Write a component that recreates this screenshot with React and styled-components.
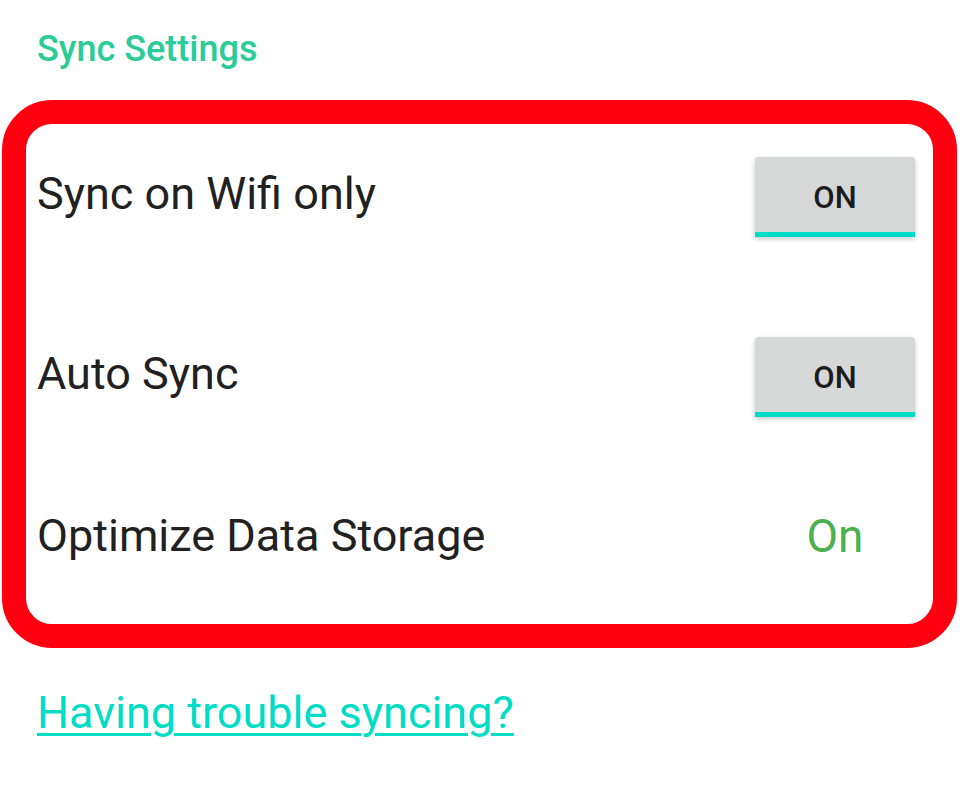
import React from "react";
import styled, { createGlobalStyle } from "styled-components";

const Global = createGlobalStyle`
  html, body { margin: 0; padding: 0; background: #ffffff; }
  body { font-family: Roboto, "Noto Sans", sans-serif; }
`;

const Page = styled.div`
  width: 960px;
  padding-top: 29px;
  box-sizing: border-box;
`;

const Title = styled.h2`
  margin: 0 0 31px 37px;
  font-size: 36px;
  line-height: 40px;
  font-weight: 500;
  color: #2bcc97;
`;

const Card = styled.div`
  margin-left: 2px;
  width: 955px;
  height: 548px;
  box-sizing: border-box;
  border: 24px solid #ff0011;
  border-radius: 50px;
  padding: 33px 18px 0 11px;
  display: flex;
  flex-direction: column;
`;

const Row = styled.div`
  display: flex;
  align-items: center;
  justify-content: space-between;
  margin-top: ${(p) => p.$gap || 0}px;
`;

const Label = styled.span`
  font-size: 45px;
  line-height: 52px;
  color: #212121;
  padding-bottom: ${(p) => p.$lift || 0}px;
`;

const Toggle = styled.button`
  width: 160px;
  height: 80px;
  box-sizing: border-box;
  border: none;
  border-bottom: 5px solid #00dcc6;
  border-radius: 4px 4px 0 0;
  background: #d6d7d7;
  box-shadow: 0 2px 5px rgba(0, 0, 0, 0.22);
  font-family: Roboto, "Noto Sans", sans-serif;
  font-size: 31px;
  font-weight: 500;
  color: #1c1c1c;
  padding: 5px 0 0 0;
  display: flex;
  align-items: center;
  justify-content: center;
`;

const Value = styled.span`
  width: 160px;
  text-align: center;
  font-size: 46px;
  line-height: 52px;
  color: #4caf50;
`;

const Link = styled.a`
  display: inline-block;
  margin: 39px 0 0 37px;
  font-size: 45px;
  line-height: 52px;
  color: #00dcc6;
  text-decoration: underline;
  text-decoration-thickness: 3px;
  text-underline-offset: 5px;
  cursor: pointer;
`;

export default function App() {
  return (
    <>
      <Global />
      <Page>
        <Title>Sync Settings</Title>
        <Card>
          <Row>
            <Label $lift={6}>Sync on Wifi only</Label>
            <Toggle>ON</Toggle>
          </Row>
          <Row $gap={100}>
            <Label $lift={6}>Auto Sync</Label>
            <Toggle>ON</Toggle>
          </Row>
          <Row $gap={93}>
            <Label>Optimize Data Storage</Label>
            <Value>On</Value>
          </Row>
        </Card>
        <Link>Having trouble syncing?</Link>
      </Page>
    </>
  );
}
